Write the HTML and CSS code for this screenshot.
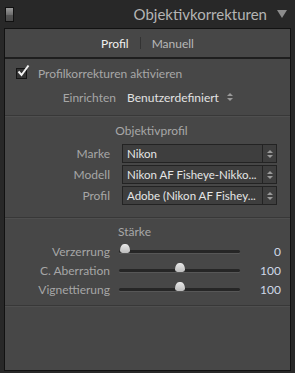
FILE: index.html
```html
<!DOCTYPE html>
<html lang="de">
<head>
    <meta charset="UTF-8">
    <title>Objektivkorrekturen</title>
    <link rel="stylesheet" href="styles.css">
</head>
<body>
    <div class="header">
        <span class="switch"></span>
        <span class="title">Objektivkorrekturen</span>
        <span class="caret"></span>
    </div>
    <div class="panel">
        <div class="tabs">
            <span class="tab active">Profil</span>
            <span class="tab-sep"></span>
            <span class="tab">Manuell</span>
        </div>
        <div class="section first">
            <label class="check-row">
                <span class="checkbox">
                    <svg width="14" height="14" viewBox="0 0 14 14"><path d="M2.5 7.5 L5.5 11 L12.5 1.5" fill="none" stroke="#f2f2f2" stroke-width="2"/></svg>
                </span>
                Profilkorrekturen aktivieren
            </label>
            <div class="row setup-row">
                <span class="label">Einrichten</span>
                <span class="plain-value">Benutzerdefiniert</span>
                <span class="arrows small"></span>
            </div>
        </div>
        <div class="section profile">
            <div class="section-title">Objektivprofil</div>
            <div class="row">
                <span class="label">Marke</span>
                <div class="select"><span class="select-text">Nikon</span><span class="select-btn"><span class="arrows"></span></span></div>
            </div>
            <div class="row">
                <span class="label">Modell</span>
                <div class="select"><span class="select-text">Nikon AF Fisheye-Nikko...</span><span class="select-btn"><span class="arrows"></span></span></div>
            </div>
            <div class="row">
                <span class="label">Profil</span>
                <div class="select"><span class="select-text">Adobe (Nikon AF Fishey...</span><span class="select-btn"><span class="arrows"></span></span></div>
            </div>
        </div>
        <div class="section amount">
            <div class="section-title left">Stärke</div>
            <div class="row slider-row">
                <span class="label">Verzerrung</span>
                <div class="track"><span class="thumb" style="left: 5%"></span></div>
                <span class="value">0</span>
            </div>
            <div class="row slider-row">
                <span class="label">C. Aberration</span>
                <div class="track"><span class="thumb" style="left: 50%"></span></div>
                <span class="value">100</span>
            </div>
            <div class="row slider-row">
                <span class="label">Vignettierung</span>
                <div class="track"><span class="thumb" style="left: 50%"></span></div>
                <span class="value">100</span>
            </div>
        </div>
    </div>
</body>
</html>
```

FILE: styles.css
```css
html, body {
    margin: 0;
    background: #282828;
}
body {
    width: 295px;
    height: 373px;
    overflow: hidden;
    font-family: Lato, "Open Sans", sans-serif;
    font-size: 12px;
    color: #a8a8a8;
}
.header {
    height: 28px;
    display: flex;
    align-items: center;
    padding: 0 8px 0 5px;
    box-sizing: border-box;
}
.switch {
    width: 7px;
    height: 13px;
    border: 1px solid #111;
    background: linear-gradient(#9a9a9a, #6e6e6e 50%, #555 51%, #4a4a4a);
}
.title {
    margin-left: auto;
    font-size: 15px;
    color: #b4b4b4;
}
.caret {
    margin-left: 10px;
    width: 0;
    height: 0;
    border-left: 5px solid transparent;
    border-right: 5px solid transparent;
    border-top: 8px solid #8c8c8c;
}
.panel {
    margin: 0 4px;
    height: 341px;
    border: 1px solid #121212;
    background: #474747;
}
.tabs {
    height: 28px;
    display: flex;
    align-items: center;
    justify-content: center;
    gap: 11px;
    border-bottom: 2px solid #1e1e1e;
    color: #b8b8b8;
}
.tab.active {
    color: #f0f0f0;
}
.tab-sep {
    width: 1px;
    height: 12px;
    background: #333;
}
.section {
    border-bottom: 1px solid #383838;
    box-shadow: 0 1px 0 #4f4f4f;
}
.section.first {
    padding: 5px 0 8px;
}
.section.profile {
    padding: 8px 0 11px;
}
.section.amount {
    padding: 7px 0 6px;
}
.check-row {
    display: flex;
    align-items: center;
    height: 18px;
    padding-left: 11px;
    gap: 11px;
}
.checkbox {
    position: relative;
    width: 9px;
    height: 9px;
    border: 1px solid #151515;
    background: #333;
}
.checkbox svg {
    position: absolute;
    left: -1px;
    top: -5px;
}
.row {
    display: flex;
    align-items: center;
    height: 21px;
}
.setup-row {
    margin-top: 5px;
    height: 20px;
}
.label {
    width: 105px;
    text-align: right;
    color: #a6a6a6;
}
.setup-row .label {
    width: 111px;
}
.plain-value {
    margin-left: 11px;
    color: #e2e2e2;
}
.arrows {
    display: inline-flex;
    flex-direction: column;
    gap: 2px;
}
.arrows::before, .arrows::after {
    content: "";
    border-left: 3px solid transparent;
    border-right: 3px solid transparent;
}
.arrows::before {
    border-bottom: 3px solid #9a9a9a;
}
.arrows::after {
    border-top: 3px solid #9a9a9a;
}
.arrows.small {
    margin-left: 8px;
}
.section-title {
    height: 14px;
    line-height: 14px;
    text-align: center;
    color: #a8a8a8;
    margin-bottom: 5px;
    padding-left: 8px;
}
.section-title.left {
    text-align: left;
    padding-left: 113px;
    margin-bottom: 3px;
}
.select {
    margin-left: 12px;
    width: 153px;
    height: 17px;
    display: flex;
    border: 1px solid #232323;
    background: #3e3e3e;
}
.select-text {
    flex: 1;
    padding-left: 4px;
    line-height: 17px;
    font-size: 11.5px;
    color: #e6e6e6;
    white-space: nowrap;
    overflow: hidden;
}
.select-btn {
    width: 13px;
    border-left: 1px solid #232323;
    display: flex;
    align-items: center;
    justify-content: center;
}
.slider-row {
    height: 19px;
}
.track {
    position: relative;
    margin-left: 9px;
    width: 121px;
    height: 3px;
    border-radius: 2px;
    background: #262626;
    box-shadow: 0 1px 0 #575757;
}
.thumb {
    position: absolute;
    top: -6px;
    width: 10px;
    height: 9px;
    margin-left: -5px;
    background: linear-gradient(#e8e8e8, #bdbdbd);
    border-radius: 50% 50% 3px 3px / 90% 90% 3px 3px;
}
.value {
    margin-left: auto;
    margin-right: 9px;
    color: #cfd9e8;
}
```
